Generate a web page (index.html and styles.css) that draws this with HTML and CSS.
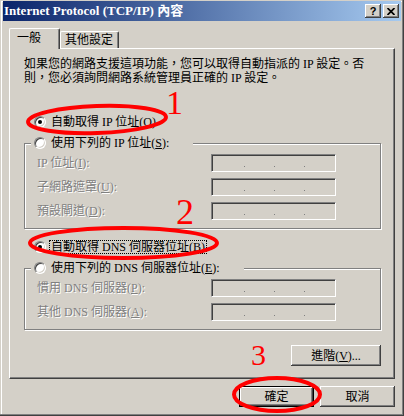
FILE: index.html
```html
<!DOCTYPE html>
<html lang="zh-Hant">
<head>
  <meta charset="UTF-8">
  <title>Internet Protocol (TCP/IP) 內容</title>
  <link rel="stylesheet" href="styles.css">
</head>
<body>
  <div class="window">
    <div class="titlebar">
      <span class="title">Internet Protocol (TCP/IP) 內容</span>
      <div class="caps">
        <span class="cap help">?</span>
        <span class="cap">
          <svg width="8" height="7" viewBox="0 0 8 7"><path d="M0.5 0l7 7M7.5 0l-7 7" stroke="#000" stroke-width="1.7"/></svg>
        </span>
      </div>
    </div>

    <div class="body">
      <div class="tabs">
        <div class="tab active">一般</div>
        <div class="tab">其他設定</div>
      </div>

      <section class="panel">
        <p class="intro">如果您的網路支援這項功能，您可以取得自動指派的 IP 設定。否<br>則，您必須詢問網路系統管理員正確的 IP 設定。</p>

        <div class="opt"><span class="radio on"></span><span>自動取得 IP 位址(<u>O</u>)</span></div>
        <div class="group">
          <div class="legend"><span class="radio"></span><span>使用下列的 IP 位址(<u>S</u>):</span></div>
          <div class="fields">
            <span class="lbl">IP 位址(<u>I</u>):</span>
            <span class="ipbox"><i></i><i></i><i></i></span>
            <span class="lbl">子網路遮罩(<u>U</u>):</span>
            <span class="ipbox"><i></i><i></i><i></i></span>
            <span class="lbl">預設閘道(<u>D</u>):</span>
            <span class="ipbox"><i></i><i></i><i></i></span>
          </div>
        </div>

        <div class="opt opt-dns"><span class="radio on"></span><span class="focus">自動取得 DNS 伺服器位址(<u>B</u>)</span></div>
        <div class="group">
          <div class="legend"><span class="radio"></span><span>使用下列的 DNS 伺服器位址(<u>E</u>):</span></div>
          <div class="fields">
            <span class="lbl">慣用 DNS 伺服器(<u>P</u>):</span>
            <span class="ipbox"><i></i><i></i><i></i></span>
            <span class="lbl">其他 DNS 伺服器(<u>A</u>):</span>
            <span class="ipbox"><i></i><i></i><i></i></span>
          </div>
        </div>

        <button class="btn adv">進階(<u>V</u>)...</button>
      </section>

      <div class="actions">
        <button class="btn default">確定</button>
        <button class="btn">取消</button>
      </div>
    </div>

    <!-- red annotations drawn over the dialog -->
    <svg class="marks" width="404" height="416" viewBox="0 0 404 416">
      <ellipse cx="97" cy="119.5" rx="69" ry="13.5" transform="rotate(-2 97 119.5)"/>
      <ellipse cx="123.5" cy="243" rx="93.5" ry="15"/>
      <ellipse cx="277" cy="394.5" rx="43" ry="16.5"/>
    </svg>
    <span class="num n1">1</span>
    <span class="num n2">2</span>
    <span class="num n3">3</span>
  </div>
</body>
</html>
```

FILE: styles.css
```css
* {
  margin: 0;
  padding: 0;
  border: 0;
  box-sizing: border-box;
}
:root {
  --face: #d4d0c8;
  --shadow: #808080;
  --dark: #404040;
  --light: #ffffff;
  --ui-font: "Liberation Serif", "Noto Sans CJK TC", serif;
}

body {
  background-color: var(--face);
  font: 12px/14px var(--ui-font);
  color: #000;
}

u {
  text-decoration: underline;
  text-underline-offset: 1px;
}

.window {
  position: relative;
  display: flex;
  flex-direction: column;
  width: 404px;
  height: 416px;
  padding: 1px 3px 3px 3px;
  background-color: var(--face);
  box-shadow: inset -1px -1px var(--dark), inset -2px -2px var(--shadow),
    inset 1px 1px var(--face), inset 2px 2px var(--light);
}

/* title bar */
.titlebar {
  display: flex;
  justify-content: space-between;
  align-items: center;
  height: 20px;
  padding: 0 2px 0 1px;
  background: linear-gradient(to right, #0a246a, #a6caf0);
  color: #fff;
}
.title {
  font: bold 13px/20px var(--ui-font);
  white-space: nowrap;
}
.caps {
  display: flex;
  gap: 2px;
}
.cap {
  display: flex;
  justify-content: center;
  align-items: center;
  width: 16px;
  height: 14px;
  background-color: var(--face);
  color: #000;
  font: bold 11px/1 "Liberation Sans", sans-serif;
  box-shadow: inset -1px -1px var(--dark), inset 1px 1px var(--light),
    inset -2px -2px var(--shadow);
}

/* tabs */
.body {
  display: flex;
  flex-direction: column;
  flex: 1;
  padding: 7px 6px 0 6px;
}
.tabs {
  display: flex;
  align-items: flex-end;
  height: 20px;
}
.tab {
  width: 59px;
  height: 17px;
  padding-left: 4px;
  line-height: 16px;
  border: 1px solid;
  border-color: var(--light) var(--dark) transparent var(--light);
  border-bottom: 0;
  border-radius: 2px 2px 0 0;
  box-shadow: inset -1px 0 var(--shadow);
}
.tab.active {
  position: relative;
  z-index: 1;
  width: 51px;
  height: 21px;
  margin-bottom: -1px;
  padding-left: 7px;
  line-height: 19px;
  background-color: var(--face);
}

/* panel */
.panel {
  display: flex;
  flex-direction: column;
  height: 331px;
  padding: 8px 13px 12px 14px;
  border: 1px solid;
  border-color: var(--light) var(--dark) var(--dark) var(--light);
  box-shadow: inset -1px -1px var(--shadow);
}
.intro {
  white-space: nowrap;
  line-height: 14px;
}

.opt {
  display: flex;
  align-items: center;
  gap: 5px;
  height: 16px;
  margin: 29px 0 0 10px;
  white-space: nowrap;
}
.opt-dns {
  margin-top: 10px;
  gap: 4px;
}
.focus {
  padding: 0 1px;
  line-height: 12px;
  outline: 1px dotted #000;
}

.radio {
  display: grid;
  place-items: center;
  flex: none;
  width: 12px;
  height: 12px;
  background-color: #fff;
  border: 1px solid;
  border-color: var(--shadow) var(--light) var(--light) var(--shadow);
  border-radius: 50%;
  box-shadow: inset 1px 1px var(--dark), inset -1px -1px var(--face);
}
.radio.on::after {
  content: "";
  width: 4px;
  height: 4px;
  background-color: #000;
  border-radius: 50%;
}

.group {
  margin-top: 13px;
  padding-bottom: 8px;
  border: 1px solid var(--shadow);
  box-shadow: inset 1px 1px var(--light), 1px 1px var(--light);
}
.legend {
  display: flex;
  align-items: center;
  gap: 5px;
  width: max-content;
  height: 16px;
  margin: -9px 0 0 6px;
  padding: 0 24px 0 3px;
  background-color: var(--face);
  white-space: nowrap;
}
.fields {
  display: grid;
  grid-template-columns: 174px 125px;
  align-items: center;
  row-gap: 6px;
  margin: 3px 0 0 12px;
}
.lbl {
  color: var(--shadow);
  text-shadow: 1px 1px var(--light);
  white-space: nowrap;
}
.ipbox {
  display: flex;
  align-items: flex-end;
  gap: 29px;
  height: 18px;
  padding: 0 0 4px 32px;
  background-color: var(--face);
  border: 1px solid;
  border-color: var(--shadow) var(--light) var(--light) var(--shadow);
  box-shadow: inset 1px 1px var(--dark), inset -1px -1px var(--face);
}
.ipbox i {
  width: 1px;
  height: 1px;
  background-color: var(--shadow);
}

/* buttons */
.btn {
  width: 75px;
  height: 21px;
  background-color: var(--face);
  color: #000;
  font: inherit;
  line-height: 14px;
  white-space: nowrap;
  box-shadow: inset -1px -1px var(--dark), inset 1px 1px var(--light),
    inset -2px -2px var(--shadow);
}
.btn.adv {
  align-self: flex-end;
  width: 90px;
  margin-top: auto;
}
.btn.default {
  box-shadow: inset 0 0 0 1px #000, inset -2px -2px var(--dark),
    inset 2px 2px var(--light), inset -3px -3px var(--shadow);
}
.actions {
  display: flex;
  justify-content: flex-end;
  gap: 6px;
  margin-top: 7px;
}

/* red annotations */
.marks {
  position: absolute;
  top: 0;
  left: 0;
  pointer-events: none;
  z-index: 2;
}
.marks ellipse {
  fill: none;
  stroke: #f00;
  stroke-width: 4;
}
.num {
  position: absolute;
  z-index: 2;
  color: #f00;
  font-family: "Liberation Serif", serif;
  line-height: 1;
}
.n1 {
  top: 86px;
  left: 166px;
  font-size: 34px;
}
.n2 {
  top: 194px;
  left: 176px;
  font-size: 36px;
}
.n3 {
  top: 340px;
  left: 251px;
  font-size: 30px;
}
```
